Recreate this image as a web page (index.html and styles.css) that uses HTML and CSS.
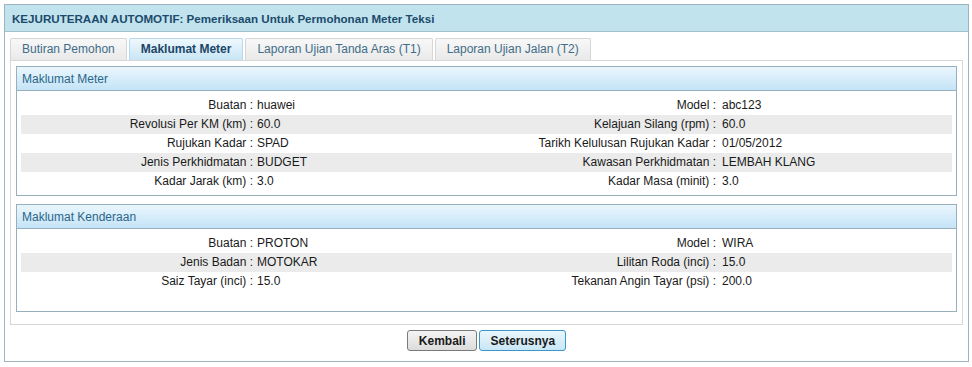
FILE: index.html
```html
<!DOCTYPE html>
<html>
<head>
<meta charset="utf-8">
<link rel="stylesheet" href="styles.css">
</head>
<body>
<div class="outer">
  <div class="title">KEJURUTERAAN AUTOMOTIF: Pemeriksaan Untuk Permohonan Meter Teksi</div>
  <div class="body">
    <div class="tabs">
      <div class="tab">Butiran Pemohon</div>
      <div class="tab active">Maklumat Meter</div>
      <div class="tab">Laporan Ujian Tanda Aras (T1)</div>
      <div class="tab">Laporan Ujian Jalan (T2)</div>
    </div>
    <div class="panel">
      <div class="box">
        <div class="box-head">Maklumat Meter</div>
        <div class="box-body">
          <div class="row"><span class="lbl">Buatan :</span><span class="val">huawei</span><span class="lbl">Model :</span><span class="val">abc123</span></div>
          <div class="row alt"><span class="lbl">Revolusi Per KM (km) :</span><span class="val">60.0</span><span class="lbl">Kelajuan Silang (rpm) :</span><span class="val">60.0</span></div>
          <div class="row"><span class="lbl">Rujukan Kadar :</span><span class="val">SPAD</span><span class="lbl">Tarikh Kelulusan Rujukan Kadar :</span><span class="val">01/05/2012</span></div>
          <div class="row alt"><span class="lbl">Jenis Perkhidmatan :</span><span class="val">BUDGET</span><span class="lbl">Kawasan Perkhidmatan :</span><span class="val">LEMBAH KLANG</span></div>
          <div class="row"><span class="lbl">Kadar Jarak (km) :</span><span class="val">3.0</span><span class="lbl">Kadar Masa (minit) :</span><span class="val">3.0</span></div>
        </div>
      </div>
      <div class="box">
        <div class="box-head">Maklumat Kenderaan</div>
        <div class="box-body">
          <div class="row"><span class="lbl">Buatan :</span><span class="val">PROTON</span><span class="lbl">Model :</span><span class="val">WIRA</span></div>
          <div class="row alt"><span class="lbl">Jenis Badan :</span><span class="val">MOTOKAR</span><span class="lbl">Lilitan Roda (inci) :</span><span class="val">15.0</span></div>
          <div class="row"><span class="lbl">Saiz Tayar (inci) :</span><span class="val">15.0</span><span class="lbl">Tekanan Angin Tayar (psi) :</span><span class="val">200.0</span></div>
          <div class="row empty"></div>
        </div>
      </div>
    </div>
    <div class="actions">
      <button class="btn">Kembali</button>
      <button class="btn focus">Seterusnya</button>
    </div>
  </div>
</div>
</body>
</html>
```
FILE: styles.css
```css
html, body {
  margin: 0;
  padding: 0;
  background: #ffffff;
}
body {
  padding: 4px;
  font-family: "Liberation Sans", Arial, sans-serif;
  font-size: 12px;
  color: #1a1a1a;
}
.outer {
  width: 963px;
  height: 356px;
  border: 1px solid #9db3c0;
  background: #ffffff;
}
.title {
  height: 26px;
  line-height: 27px;
  background: #c1e3ed;
  border-bottom: 1px solid #a3c2cf;
  padding-left: 7px;
  font-weight: bold;
  font-size: 11.6px;
  color: #1c4a6c;
}
.body {
  padding: 6px 5px 0 5px;
}
.tabs {
  display: flex;
  gap: 2px;
  height: 22px;
}
.tab {
  height: 21px;
  line-height: 21px;
  padding: 0 11px 0 11px;
  border: 1px solid #d6d6d6;
  border-bottom: none;
  border-radius: 2px 2px 0 0;
  background: linear-gradient(#f8f8f8, #e9e9e9);
  color: #3f6d88;
  font-size: 12px;
}
.tab.active {
  background: linear-gradient(#eef8fd, #c8e5f5);
  border-color: #b9d9ea;
  color: #1b4668;
  font-weight: bold;
}
.panel {
  width: 941px;
  border: 1px solid #d7d7d7;
  padding: 5px 5px 12px 5px;
  display: flex;
  flex-direction: column;
  gap: 8px;
}
.box {
  border: 1px solid #98b0bd;
}
.box-head {
  height: 23px;
  line-height: 24px;
  border-bottom: 1px solid #98b0bd;
  background: linear-gradient(#eaf6fd, #c4e4f7);
  padding-left: 5px;
  color: #2b6689;
  font-size: 12px;
}
.box-body {
  padding: 5px 4px 4px 4px;
}
.row {
  display: grid;
  grid-template-columns: 232px 231px 232px 1fr;
  height: 19px;
  line-height: 19px;
}
.row.alt {
  background: #ebebeb;
}
.row.empty {
  height: 16px;
}
.lbl {
  text-align: right;
  white-space: nowrap;
}
.val {
  padding-left: 4px;
  white-space: nowrap;
}
.val:last-child {
  padding-left: 6px;
}
.actions {
  display: flex;
  justify-content: center;
  gap: 2px;
  padding-top: 5px;
}
.btn {
  height: 21px;
  padding: 0 11px;
  font-family: "Liberation Sans", Arial, sans-serif;
  font-size: 12px;
  font-weight: bold;
  color: #1a1a1a;
  border: 1px solid #7a7a7a;
  border-radius: 3px;
  background: linear-gradient(#f4f4f4, #dcdcdc);
}
.btn.focus {
  border-color: #3c97c9;
  background: linear-gradient(#eaf6fc, #c9e6f5);
  padding: 0 10px;
}
```
